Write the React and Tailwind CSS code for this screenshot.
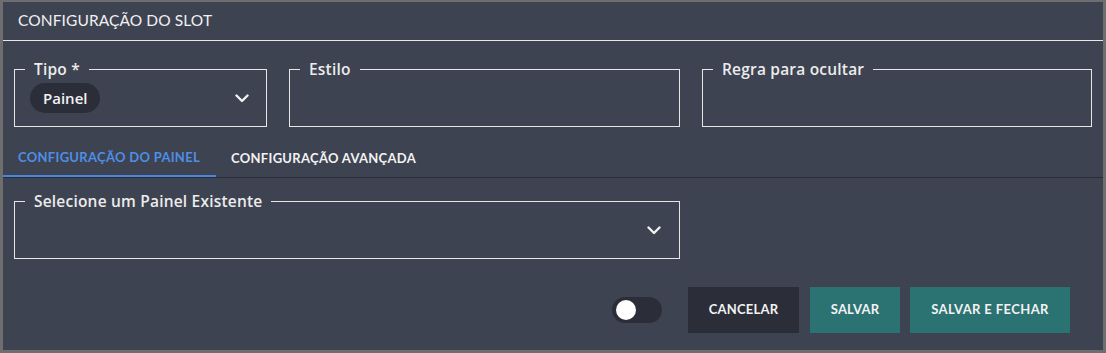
const font = { fontFamily: "Lato, 'Noto Sans', sans-serif" };
const wide = { fontFamily: "'Open Sans', 'Noto Sans', sans-serif" };

function Chevron() {
  return (
    <svg width="14" height="9" viewBox="0 0 14 9" fill="none" className="shrink-0">
      <path d="M1.5 1.5 L7 7 L12.5 1.5" stroke="#f2f2f2" strokeWidth="2.4" strokeLinecap="round" strokeLinejoin="round" />
    </svg>
  );
}

function Field({ label, className, children }) {
  return (
    <fieldset className={"h-[67px] border border-[#e6e6e6] p-0 min-w-0 " + className}>
      <legend style={wide} className="ml-[10px] px-[9px] text-[15.5px] leading-[18px] font-semibold text-[#ececec] tracking-[0.2px]">{label}</legend>
      {children}
    </fieldset>
  );
}

export default function App() {
  return (
    <div style={font} className="w-[1106px] h-[353px] bg-[#3e4351] border-l-[3px] border-r-[3px] border-t-2 border-b-[3px] border-[#6e6e6e] text-white flex flex-col">
      <div className="h-[38px] flex items-center px-[15px] text-[15.5px] text-[#f0f0f0] tracking-[0.1px]">CONFIGURAÇÃO DO SLOT</div>
      <div className="h-px bg-[#e8e8e8]" />

      <div className="flex gap-[22px] pl-[11px] mt-[19px]">
        <Field label="Tipo *" className="w-[253px]">
          <div className="flex items-center justify-between pl-[15px] pr-[17px] mt-[5px]">
            <span style={wide} className="h-[30px] px-[13px] rounded-full bg-[#2b2e38] flex items-center text-[15px] font-semibold text-[#f2f2f2]">Painel</span>
            <Chevron />
          </div>
        </Field>
        <Field label="Estilo" className="w-[391px]" />
        <Field label="Regra para ocultar" className="w-[390px]" />
      </div>

      <div className="mt-[13px] flex text-[13px] font-bold tracking-[0.3px]">
        <div className="w-[213px] h-[37px] px-[15px] flex items-center text-[#4f8ee6] border-b-2 border-[#4a86e0]">CONFIGURAÇÃO DO PAINEL</div>
        <div className="h-[37px] px-[15px] flex items-center text-[#f2f2f2]">CONFIGURAÇÃO AVANÇADA</div>
      </div>
      <div className="h-px bg-[#2a2d37]" />

      <div className="pl-[11px] mt-[14px]">
        <Field label="Selecione um Painel Existente" className="w-[666px]">
          <div className="flex justify-end items-center h-[40px] pr-[18px]">
            <Chevron />
          </div>
        </Field>
      </div>

      <div className="flex items-center justify-end mt-[28px] pr-[33px] text-[13px] font-bold text-[#f2f2f2] tracking-[0.2px]">
        <div className="w-[50px] h-[26px] rounded-full bg-[#2b2e38] flex items-center pl-[4px] mr-[26px]">
          <div className="w-[20px] h-[20px] rounded-full bg-white" />
        </div>
        <button className="w-[111px] h-[46px] bg-[#2b2e38] mr-[11px]">CANCELAR</button>
        <button className="w-[90px] h-[46px] bg-[#2b7272] mr-[10px]">SALVAR</button>
        <button className="w-[160px] h-[46px] bg-[#2b7272] tracking-[0.4px]">SALVAR E FECHAR</button>
      </div>
    </div>
  );
}
